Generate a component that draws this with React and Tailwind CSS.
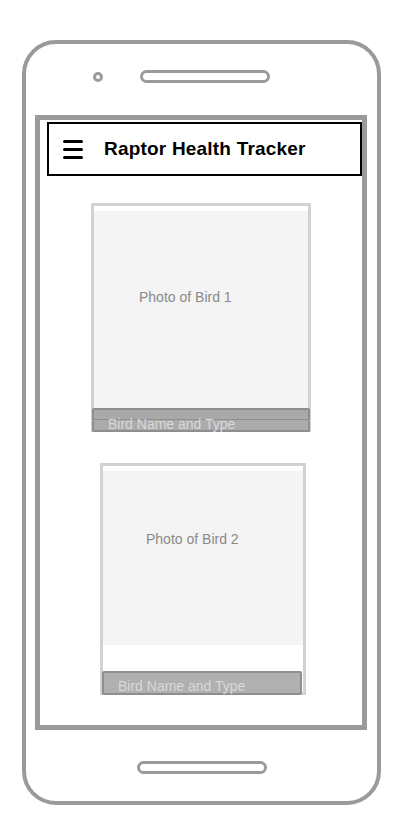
import React from 'react'

const BIRDS = [
    { label: 'Photo of Bird 1', card: 'ml-[51px] mt-[27px] w-[220px] h-[229px]', photo: 'pt-[76px] pl-[45px]', gap: 'h-0', bar: 'mx-[-2px] mb-[-3px]', split: true },
    { label: 'Photo of Bird 2', card: 'ml-[60px] mt-[31px] w-[206px] h-[232px]', photo: 'pt-[58px] pl-[43px]', gap: 'h-[26px]', bar: 'mr-[1px] ml-[-1px] mb-[-3px]', split: false },
]

function Speaker() {
    return <div className="w-[130px] h-[13px] border-[3px] border-[#9a9a9a] rounded-full" />
}

function BirdCard({ bird }) {
    return (
        <div className={`${bird.card} border-[3px] border-[#d2d2d2] bg-white flex flex-col pt-[5px]`}>
            <div className={`flex-1 bg-[#f4f4f4] ${bird.photo} text-[14px] text-[#8a8a8a]`}
                style={{ fontFamily: '"Liberation Sans", Arial, sans-serif' }}>
                {bird.label}
            </div>
            <div className={bird.gap} />
            <div className={`relative h-[24px] ${bird.bar}`}>
                {bird.split ? (
                    <>
                        <div className="h-[13px] bg-[#a9a9a9] border-2 border-[#8e8e8e] rounded-[2px]" />
                        <div className="h-[12px] -mt-[1px] bg-[#ababab] border-2 border-t-0 border-[#8e8e8e] rounded-[2px]" />
                    </>
                ) : (
                    <div className="h-[24px] bg-[#b0b0b0] border-2 border-[#8e8e8e] rounded-[2px]" />
                )}
                <span className={`absolute ${bird.split ? 'left-[16px] top-[6px]' : 'left-[16px] top-[5px]'} text-[14px] leading-[20px] text-[#d9d9d9] whitespace-nowrap`}
                    style={{ fontFamily: '"Liberation Sans", Arial, sans-serif' }}>
                    Bird Name and Type
                </span>
            </div>
        </div>
    )
}

export default function App() {
    return (
        <div className="w-[400px] h-[821px] bg-white pt-[40px] pl-[22px]">
            {/* phone body */}
            <div className="w-[359px] h-[765px] border-4 border-[#9a9a9a] rounded-[34px] flex flex-col">
                {/* top: camera + speaker */}
                <div className="h-[71px] flex items-center pl-[67px] pb-[6px] gap-[37px]">
                    <div className="w-[10px] h-[10px] rounded-full border-[3px] border-[#9a9a9a]" />
                    <Speaker />
                </div>

                {/* screen */}
                <div className="ml-[9px] w-[332px] h-[615px] border-[5px] border-[#9a9a9a] flex flex-col">
                    <div className="ml-[7px] mt-[2px] h-[54px] border-2 border-black flex items-center">
                        <div className="ml-[14px] flex flex-col gap-[5px]">
                            <span className="block w-[20px] h-[3px] bg-black rounded-full" />
                            <span className="block w-[20px] h-[3px] bg-black rounded-full" />
                            <span className="block w-[20px] h-[3px] bg-black rounded-full" />
                        </div>
                        <h1 className="ml-[21px] text-[19px] font-bold text-black tracking-[0.2px]"
                            style={{ fontFamily: '"Liberation Sans", Arial, sans-serif' }}>
                            Raptor Health Tracker
                        </h1>
                    </div>

                    {BIRDS.map(b => <BirdCard key={b.label} bird={b} />)}
                </div>

                {/* bottom speaker */}
                <div className="flex-1 flex items-center pl-[111px] pt-[4px]">
                    <Speaker />
                </div>
            </div>
        </div>
    )
}
